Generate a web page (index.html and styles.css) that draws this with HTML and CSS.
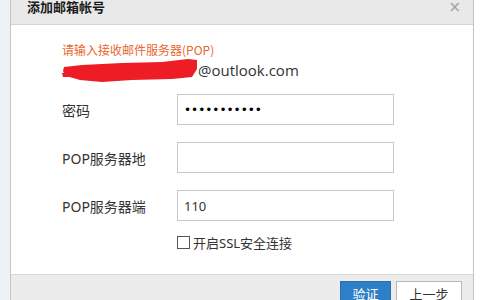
FILE: index.html
```html
<!DOCTYPE html>
<html lang="zh-CN">
<head>
<meta charset="utf-8">
<link rel="stylesheet" href="styles.css">
</head>
<body>
<div class="page">
  <div class="backdrop"></div>
  <div class="dialog">
    <div class="titlebar">
      <span class="title">添加邮箱帐号</span>
      <span class="close">×</span>
    </div>
    <div class="content">
      <div class="hint">请输入接收邮件服务器(POP)</div>
      <div class="email">
        <span class="masked"><svg width="136" height="23" viewBox="0 0 136 23"><path d="M2 8 L20 6 L60 4 L100 3 L126 0 L135 1 L135 10 L130 18 L110 20 L70 21 L40 23 L18 21 L4 17 L1 12 Z" fill="#ee1c25"/><path d="M0 14 L6 13 L7 18 L1 18 Z" fill="#ee1c25"/></svg></span><span class="domain">@outlook.com</span>
      </div>
      <div class="row first">
        <label class="label">密码</label>
        <input class="field pw" type="password" value="abcdefghijk">
      </div>
      <div class="row">
        <label class="label">POP服务器地</label>
        <input class="field" type="text" value="">
      </div>
      <div class="row">
        <label class="label">POP服务器端</label>
        <input class="field" type="text" value="110">
      </div>
      <div class="check-row">
        <span class="box"></span>
        <span class="check-label">开启SSL安全连接</span>
      </div>
    </div>
    <div class="footer">
      <button class="btn primary">验证</button>
      <button class="btn">上一步</button>
    </div>
  </div>
</div>
</body>
</html>
```
FILE: styles.css
```css
html, body {
  margin: 0;
  padding: 0;
  background: #ffffff;
  width: 480px;
  height: 300px;
  overflow: hidden;
  font-family: "Noto Sans", "Noto Sans CJK SC", sans-serif;
}
.page {
  display: flex;
  height: 300px;
}
.backdrop {
  width: 10px;
  background: #eef1f5;
  flex: none;
}
.dialog {
  width: 462px;
  flex: none;
  border-left: 1px solid #c4c4c4;
  border-right: 1px solid #c4c4c4;
  display: flex;
  flex-direction: column;
  height: 300px;
  background: #fff;
}
.titlebar {
  box-sizing: border-box;
  height: 25px;
  background: #e9e9e9;
  border-bottom: 1px solid #d4d4d4;
  display: flex;
  justify-content: space-between;
  align-items: flex-start;
  padding: 0 12px 0 16px;
  flex: none;
}
.title {
  font-family: "Noto Sans CJK SC", sans-serif;
  font-weight: bold;
  font-size: 13px;
  line-height: 14px;
  color: #1a1a1a;
}
.close {
  font-family: "DejaVu Sans", sans-serif;
  font-size: 15px;
  line-height: 14px;
  color: #a0a0a0;
}
.content {
  flex: 1;
  padding: 17px 0 0 51px;
}
.hint {
  font-family: "Noto Sans CJK SC", sans-serif;
  font-size: 12px;
  line-height: 16px;
  color: #e9662c;
}
.email {
  display: flex;
  align-items: center;
  height: 24px;
}
.masked {
  display: flex;
  margin-top: 1px;
}
.domain {
  font-family: "Open Sans", sans-serif;
  font-size: 15px;
  color: #333;
  line-height: 20px;
}
.row {
  display: flex;
  align-items: center;
  margin-top: 17px;
}
.row.first { margin-top: 12px; }
.label {
  width: 115px;
  font-family: "Noto Sans", "Noto Sans CJK SC", sans-serif;
  font-size: 14px;
  color: #333;
}
.field {
  box-sizing: border-box;
  width: 217px;
  height: 31px;
  border: 1px solid #c8c8c8;
  padding: 0 6px;
  margin: 0;
  font-family: "Noto Sans", sans-serif;
  font-size: 13px;
  color: #333;
  outline: none;
}
.field.pw {
  font-family: "DejaVu Sans", sans-serif;
  font-size: 12px;
  color: #000;
}
.check-row {
  display: flex;
  align-items: center;
  margin: 12px 0 0 115px;
}
.box {
  width: 11px;
  height: 11px;
  border: 1px solid #555;
  background: #fff;
  margin-right: 3px;
}
.check-label {
  font-family: "Noto Sans", "Noto Sans CJK SC", sans-serif;
  font-size: 13px;
  color: #333;
}
.footer {
  box-sizing: border-box;
  height: 26px;
  flex: none;
  background: #ececec;
  border-top: 1px solid #d8d8d8;
  display: flex;
  justify-content: flex-end;
  align-items: flex-start;
  padding: 6px 11px 0 0;
  gap: 5px;
  overflow: hidden;
}
.btn {
  flex: none;
  height: 26px;
  border: 1px solid #b8b8b8;
  background: #fff;
  font-family: "Noto Sans CJK SC", sans-serif;
  font-size: 13px;
  line-height: 22px;
  color: #333;
  padding: 0;
  width: 66px;
  margin: 0;
}
.btn.primary {
  width: 51px;
  background: #2d7fc7;
  border-color: #2a6fae;
  color: #fff;
}
```
